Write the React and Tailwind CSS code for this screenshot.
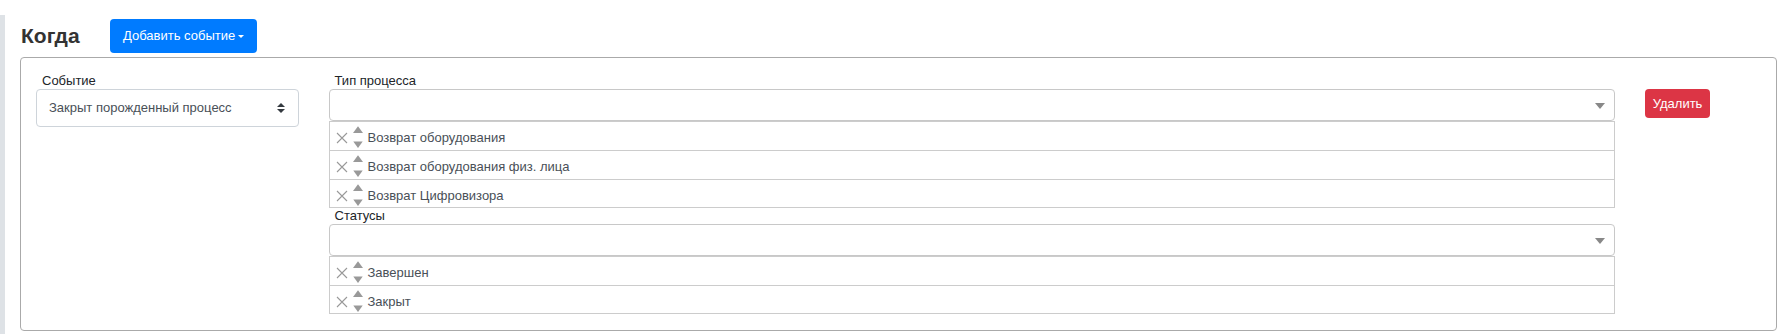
import React from "react";

const font = { fontFamily: '"Liberation Sans", Arial, sans-serif' };

function XIcon() {
  return (
    <svg width="12" height="12" viewBox="0 0 12 12" className="shrink-0 mt-[3px]">
      <path d="M1 1L11 11M11 1L1 11" stroke="#999" strokeWidth="1.1" fill="none" />
    </svg>
  );
}

function Arrows() {
  return (
    <svg width="10" height="29" viewBox="0 0 10 29" className="shrink-0 ml-[5px]">
      <polygon points="5,4.2 10,11 0,11" fill="#999" />
      <polygon points="0.3,19.6 9.7,19.6 5,26" fill="#999" />
    </svg>
  );
}

function Item({ text, last }) {
  return (
    <div
      className={
        "flex h-[29px] items-center border-t border-[#ccc] pl-[6px] pt-[1px] " +
        (last ? "border-b" : "")
      }
    >
      <XIcon />
      <Arrows />
      <span className="ml-[5px] text-[13px] leading-[16px] text-[#495057] mt-[3px]">{text}</span>
    </div>
  );
}

function Multi({ label, items }) {
  return (
    <div>
      <div className="pl-[6px] text-[13px] font-normal leading-[16px] text-[#212529]">{label}</div>
      <div className="relative h-[32px] rounded-[4px] border border-[#c8c8c8] bg-white">
        <svg width="10" height="6" viewBox="0 0 10 6" className="absolute right-[9px] top-[13px]">
          <polygon points="0,0 10,0 5,6" fill="#888" />
        </svg>
      </div>
      <div className="border-x border-[#ccc]">
        {items.map((t, i) => (
          <Item key={t} text={t} last={i === items.length - 1} />
        ))}
      </div>
    </div>
  );
}

export default function App() {
  return (
    <div style={font} className="w-[1783px] h-[334px] overflow-hidden bg-white">
      <div className="mt-[15px] border-l-[5px] border-[#dee2e6] pl-[15px] pr-[6px] pb-[20px]">
        <div className="flex items-center pt-[4px] mb-[4px]">
          <h4 className="w-[90px] text-[21px] font-bold leading-[24px] text-[#333] pl-[1px]">Когда</h4>
          <button className="flex h-[34px] items-center rounded-[4px] bg-[#007bff] pl-[13px] pr-[13px] text-[13px] text-white">
            Добавить событие
            <span className="ml-[3px] inline-block h-0 w-0 border-x-[3px] border-t-[3.5px] border-x-transparent border-t-white" />
          </button>
        </div>
        <div className="rounded-[4px] border border-[#aaa] pt-[15px] pb-[16px]">
          <div className="grid grid-cols-12">
            <div className="col-span-2 px-[15px]">
              <div className="pl-[6px] text-[13px] font-normal leading-[16px] text-[#212529]">Событие</div>
              <div className="relative flex h-[38px] items-center rounded-[4px] border border-[#ced4da] pl-[12px] text-[13px] text-[#495057]">
                Закрыт порожденный процесс
                <svg width="8" height="10" viewBox="0 0 4 5" className="absolute right-[13px] top-[13px]">
                  <path d="M2 0L0 2h4zm0 5L0 3h4z" fill="#343a40" />
                </svg>
              </div>
            </div>
            <div className="col-span-9 px-[15px]">
              <Multi
                label="Тип процесса"
                items={["Возврат оборудования", "Возврат оборудования физ. лица", "Возврат Цифровизора"]}
              />
              <Multi label="Статусы" items={["Завершен", "Закрыт"]} />
            </div>
            <div className="col-span-1 px-[15px] pt-[16px]">
              <button className="flex h-[29px] items-center rounded-[4px] bg-[#dc3545] px-[8px] text-[13px] text-white">
                Удалить
              </button>
            </div>
          </div>
        </div>
      </div>
    </div>
  );
}
